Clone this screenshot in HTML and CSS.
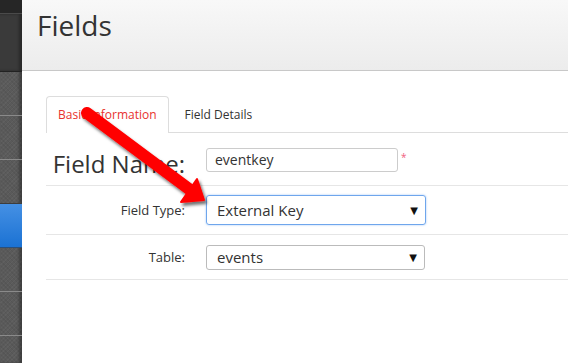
FILE: index.html
```html
<!doctype html>
<html lang="en">

<head>
    <meta charset="UTF-8" />
    <title>Fields</title>
    <link rel="stylesheet" href="styles.css">
</head>

<body>
    <div class="app">
        <!-- Sidebar -->
        <div class="sidebar">
            <div class="side-top"></div>
            <div class="side-head"></div>
            <div class="side-item"></div>
            <div class="side-item"></div>
            <div class="side-item"></div>
            <div class="side-item active"></div>
            <div class="side-item"></div>
            <div class="side-item"></div>
            <div class="side-item"></div>
        </div>

        <!-- Main -->
        <div class="main">
            <div class="page-header">
                <h1 class="page-title">Fields</h1>
            </div>

            <div class="content">
                <ul class="tabs">
                    <li class="tab active">Basic Information</li>
                    <li class="tab">Field Details</li>
                </ul>

                <div class="form-row row-name">
                    <label class="form-label big">Field Name:</label>
                    <div class="form-control">
                        <div class="text-input">eventkey</div>
                        <span class="required">*</span>
                    </div>
                </div>

                <div class="form-row row-type">
                    <label class="form-label">Field Type:</label>
                    <div class="form-control">
                        <div class="select focused">
                            <span>External Key</span>
                            <span class="caret">&#9660;</span>
                        </div>
                    </div>
                </div>

                <div class="form-row row-table">
                    <label class="form-label">Table:</label>
                    <div class="form-control">
                        <div class="select small">
                            <span>events</span>
                            <span class="caret">&#9660;</span>
                        </div>
                    </div>
                </div>
            </div>
        </div>
    </div>

    <!-- Annotation arrow -->
    <svg class="annotation" width="568" height="363" viewBox="0 0 568 363">
        <defs>
            <filter id="shadow" x="-20%" y="-20%" width="140%" height="140%">
                <feDropShadow dx="2" dy="3" stdDeviation="1.6" flood-color="#000" flood-opacity="0.55" />
            </filter>
        </defs>
        <g filter="url(#shadow)" fill="#ff0000" stroke="#ff0000">
            <line x1="87" y1="113" x2="189" y2="189" stroke-width="12" stroke-linecap="round" />
            <polygon points="204,200 181,202 197,179" stroke-width="2" stroke-linejoin="round" />
        </g>
    </svg>
</body>

</html>
```

FILE: styles.css
```css
body {
    margin: 0;
    font-family: 'Open Sans', 'DejaVu Sans', sans-serif;
    color: #333;
    background: white;
    overflow: hidden;
}

.app {
    display: flex;
    height: 363px;
}

/* Sidebar */
.sidebar {
    width: 22px;
    flex-shrink: 0;
    background-color: #5a5a5a;
    background-image:
        repeating-linear-gradient(45deg, rgba(0, 0, 0, 0.06) 0 1px, transparent 1px 3px),
        repeating-linear-gradient(-45deg, rgba(255, 255, 255, 0.04) 0 1px, transparent 1px 3px);
    box-shadow: inset -3px 0 3px rgba(0, 0, 0, 0.3);
}

.side-top {
    height: 13px;
    background: #262626;
    border-bottom: 1px solid #4a4a4a;
}

.side-head {
    height: 57px;
    background: #3a3a3a;
    border-bottom: 1px solid #222;
    box-shadow: inset -3px 0 3px rgba(0, 0, 0, 0.3);
}

.side-item {
    height: 43px;
    border-bottom: 1px solid #8a8a8a;
}

.side-item:nth-child(5) {
    border-bottom-color: #3d3d3d;
}

.side-item.active {
    background: linear-gradient(to bottom, #4590e4 0%, #1b72d3 100%);
    border-bottom-color: #2a4f7a;
}

/* Main */
.main {
    flex: 1;
    display: flex;
    flex-direction: column;
}

.page-header {
    height: 71px;
    background: linear-gradient(to bottom, #f8f8f8 0%, #ececec 100%);
    border-bottom: 1px solid #c8c8c8;
    box-sizing: border-box;
    padding: 6px 0 0 15px;
}

.page-title {
    margin: 0;
    font-size: 28px;
    font-weight: normal;
    color: #333;
}

.content {
    padding: 25px 0 0 24px;
}

.tabs {
    list-style: none;
    margin: 0;
    padding: 0;
    display: flex;
    border-bottom: 1px solid #ddd;
}

.tab {
    font-size: 12px;
    padding: 9px 16px 9px 15px;
    color: #333;
    border: 1px solid transparent;
    border-bottom: none;
    margin-bottom: -1px;
}

.tab.active {
    color: #e8322d;
    background: white;
    border-color: #ddd;
    border-radius: 4px 4px 0 0;
    padding: 9px 11px 10px 11px;
}

.form-row {
    display: flex;
    align-items: center;
    border-bottom: 1px solid #e6e6e6;
}

.row-name {
    height: 52px;
}

.row-type {
    height: 48px;
}

.row-table {
    height: 44px;
}

.form-label {
    width: 139px;
    text-align: right;
    font-size: 13px;
    color: #333;
    padding-right: 21px;
    box-sizing: content-box;
}

.form-label.big {
    font-size: 24px;
    padding-top: 8px;
}

.form-control {
    display: flex;
    align-items: flex-start;
}

.text-input {
    width: 192px;
    height: 24px;
    box-sizing: border-box;
    border: 1px solid #ccc;
    border-radius: 3px;
    font-size: 14px;
    line-height: 21px;
    padding-left: 8px;
    color: #333;
    margin-top: 2px;
}

.required {
    color: #f06080;
    font-size: 10px;
    margin-left: 3px;
    line-height: 10px;
    margin-top: 6px;
}

.select {
    width: 220px;
    box-sizing: border-box;
    border: 1px solid #bbb;
    border-radius: 3px;
    font-size: 15px;
    color: #333;
    display: flex;
    align-items: center;
    justify-content: space-between;
    padding: 0 7px 0 10px;
}

.select.focused {
    height: 30px;
    border-color: #6fa6ec;
    box-shadow: 0 0 2px rgba(80, 150, 240, 0.6);
}

.select.small {
    height: 25px;
    width: 219px;
}

.caret {
    font-size: 10px;
    color: #111;
}

.annotation {
    position: absolute;
    left: 0;
    top: 0;
    pointer-events: none;
}
```
